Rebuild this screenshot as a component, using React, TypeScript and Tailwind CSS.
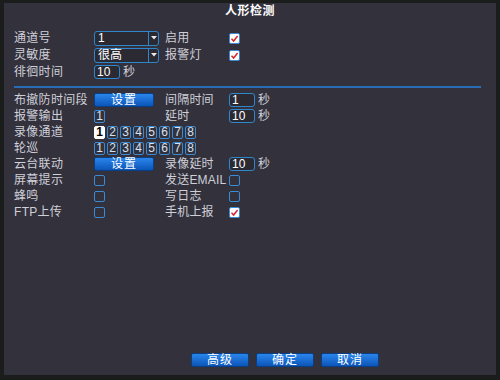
const font = "font-['Liberation_Sans','Noto_Sans_CJK_SC',sans-serif]";

function Check({ on }: { on?: boolean }) {
  return (
    <span
      className={`w-[11px] h-[11px] rounded-[2px] border border-[#3a8ad4] flex items-center justify-center ${
        on ? "bg-white" : "bg-transparent"
      }`}
    >
      {on && (
        <svg width="9" height="9" viewBox="0 0 9 9">
          <path d="M1.5 4.8 L3.6 7 L7.6 2" stroke="#d4262b" strokeWidth="1.5" fill="none" />
        </svg>
      )}
    </span>
  );
}

function Select({ value }: { value: string }) {
  return (
    <div className="w-[65px] h-[15px] rounded-[3px] border border-[#2f86cc] flex items-stretch bg-[#2b2a33]">
      <span className="flex-1 pl-[3px] leading-[13px] text-white text-[12px]">{value}</span>
      <span className="w-[10px] border-l border-[#2f86cc] flex items-center justify-center">
        <svg width="6" height="4" viewBox="0 0 6 4">
          <path d="M0 0 H6 L3 3.5 Z" fill="#e8e8e8" />
        </svg>
      </span>
    </div>
  );
}

function Input({ value }: { value: string }) {
  return (
    <div className="flex items-center gap-[3px]">
      <span className="w-[26px] h-[14px] rounded-[3px] border border-[#2f86cc] bg-[#2b2a33] pl-[2px] leading-[12px] text-white text-[12px]">
        {value}
      </span>
      <span>秒</span>
    </div>
  );
}

function Btn({ label, w = "w-[60px]" }: { label: string; w?: string }) {
  return (
    <span
      className={`${w} h-[14px] rounded-[2px] bg-gradient-to-b from-[#2a86ec] to-[#0c55b8] border border-[#0a3f86] text-white text-[12px] leading-[12px] flex items-center justify-center tracking-[1px]`}
    >
      {label}
    </span>
  );
}

function Boxes({ n, sel }: { n: number; sel?: number }) {
  return (
    <div className="flex gap-[2px]">
      {Array.from({ length: n }, (_, i) => (
        <span
          key={i}
          className={`w-[11px] h-[13px] rounded-[2px] border flex items-center justify-center text-[12px] leading-none ${
            sel === i
              ? "bg-white border-white text-black font-bold"
              : "border-[#3a8ad4] text-[#d4e2f2]"
          }`}
        >
          {i + 1}
        </span>
      ))}
    </div>
  );
}

function Row({
  h,
  a,
  b,
  c,
  d,
}: {
  h: string;
  a: string;
  b?: React.ReactNode;
  c?: string;
  d?: React.ReactNode;
}) {
  return (
    <div className={`grid grid-cols-[80px_71px_64px_1fr] items-center ${h}`}>
      <span className="tracking-[0.3px]">{a}</span>
      <div className="flex">{b}</div>
      <span className="tracking-[0.2px] whitespace-nowrap">{c}</span>
      <div className="flex">{d}</div>
    </div>
  );
}

export default function App() {
  return (
    <div className={`w-[500px] h-[380px] bg-[#1b1c1c] pl-[4px] pr-[4px] pt-[3px] pb-[5px] ${font}`}>
      <div className="h-full bg-[#32313c] flex flex-col text-[12px] text-[#cfcfd8]">
        <div className="h-[16px] leading-[16px] text-center text-white font-bold tracking-[0.5px]">人形检测</div>
        <div className="mt-[10px] pl-[10px]">
          <Row h="h-[17px]" a="通道号" b={<Select value="1" />} c="启用" d={<Check on />} />
          <Row h="h-[17px]" a="灵敏度" b={<Select value="很高" />} c="报警灯" d={<Check on />} />
          <Row h="h-[17px]" a="徘徊时间" b={<Input value="10" />} />
        </div>
        <div className="mt-[6px] ml-[10px] mr-[15px] h-[2px] bg-[#2a6cb4]" />
        <div className="mt-[3px] pl-[10px]">
          <Row h="h-[16px]" a="布撤防时间段" b={<Btn label="设置" />} c="间隔时间" d={<Input value="1" />} />
          <Row h="h-[16px]" a="报警输出" b={<Boxes n={1} />} c="延时" d={<Input value="10" />} />
          <Row h="h-[16px]" a="录像通道" b={<Boxes n={8} sel={0} />} />
          <Row h="h-[16px]" a="轮巡" b={<Boxes n={8} />} />
          <Row h="h-[16px]" a="云台联动" b={<Btn label="设置" />} c="录像延时" d={<Input value="10" />} />
          <Row h="h-[16px]" a="屏幕提示" b={<Check />} c="发送EMAIL" d={<Check />} />
          <Row h="h-[16px]" a="蜂鸣" b={<Check />} c="写日志" d={<Check />} />
          <Row h="h-[16px]" a="FTP上传" b={<Check />} c="手机上报" d={<Check on />} />
        </div>
        <div className="flex-1" />
        <div className="flex gap-[7px] pl-[187px] pb-[8px]">
          <Btn label="高级" w="w-[58px]" />
          <Btn label="确定" w="w-[58px]" />
          <Btn label="取消" w="w-[58px]" />
        </div>
      </div>
    </div>
  );
}
